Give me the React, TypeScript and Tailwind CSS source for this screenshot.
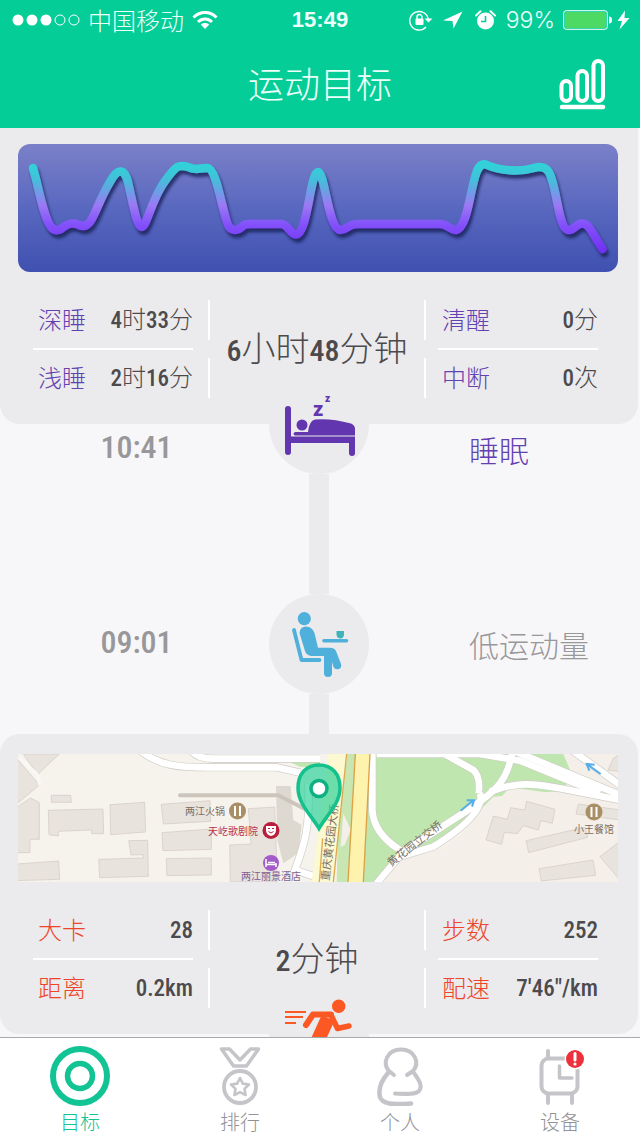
import { useState } from "react"

type Stat = { label: string; value: string }

const sleepStats: Stat[] = [
  { label: "深睡", value: "4时33分" },
  { label: "浅睡", value: "2时16分" },
  { label: "清醒", value: "0分" },
  { label: "中断", value: "0次" },
]

const runStats: Stat[] = [
  { label: "大卡", value: "28" },
  { label: "距离", value: "0.2km" },
  { label: "步数", value: "252" },
  { label: "配速", value: "7'46\"/km" },
]

const StatusBar = () => (
  <div className="grid h-10 grid-cols-[1fr_auto_1fr] items-center px-[10px]">
    <div className="flex items-center">
      <svg className="ml-[2px]" width="68" height="12" viewBox="0 0 68 12" fill="#fff">
        <circle cx="6" cy="6" r="5.5" />
        <circle cx="20" cy="6" r="5.5" />
        <circle cx="34" cy="6" r="5.5" />
        <circle cx="48" cy="6" r="5" fill="none" stroke="#fff" />
        <circle cx="62" cy="6" r="5" fill="none" stroke="#fff" />
      </svg>
      <span className="ml-2 text-[24px] leading-10 font-light">中国移动</span>
      <svg className="ml-2" width="26" height="20" viewBox="0 0 26 20" fill="none" stroke="#fff" strokeWidth="3">
        <path d="M1.5 7.500C8 .8 18 .8 24.500 7.500" />
        <path d="M6 12C10 8 16 8 20 12" />
        <path d="M13 19L8.800 14.600C11 12.600 15 12.600 17.200 14.600Z" fill="#fff" stroke="none" />
      </svg>
    </div>
    <span className="font-['Liberation_Sans',sans-serif] text-[22px] leading-10 font-bold">15:49</span>
    <div className="flex items-center justify-end">
      <svg width="24" height="22" viewBox="0 0 24 22" fill="none" stroke="#fff" strokeWidth="1.4">
        <path d="M17 18A9.300 9.300 0 1 1 19.300 10.500" />
        <path d="M15.500 9.500h8L19.500 13.500z" fill="#fff" stroke="none" />
        <rect x="6.500" y="9.500" width="8" height="6.500" rx="1" fill="#fff" stroke="none" />
        <path d="M8 10V8a2.500 2.500 0 0 1 5 0v2" />
      </svg>
      <svg className="ml-[10px]" width="20" height="18" viewBox="0 0 20 18" fill="#fff">
        <path d="M19.500 .5L0 9.500l9.500 .6L10.500 17.500z" />
      </svg>
      <svg className="ml-3" width="21" height="20" viewBox="0 0 21 20" fill="#fff">
        <circle cx="10.500" cy="11" r="8.500" />
        <path d="M1 5.500L5.500 1.200M20 5.500L15.500 1.200" stroke="#fff" strokeWidth="2" strokeLinecap="round" />
        <path d="M10.500 6v5.500H6" fill="none" stroke="#05cd98" strokeWidth="1.600" />
      </svg>
      <span className="ml-[10px] font-[Inter,sans-serif] text-[23px] leading-10 font-light">99%</span>
      <svg className="ml-2" width="67" height="20" viewBox="0 0 67 20">
        <rect x=".7" y=".7" width="43.600" height="18.600" rx="2.500" fill="none" stroke="#fff" />
        <rect x="2" y="2" width="41" height="16" rx="1.500" fill="#4cd964" />
        <path d="M46 6.500q3 0 3 3.500t-3 3.500z" fill="#fff" />
        <path d="M62 0.500L54.500 11h4.500l-2.500 8.500L66.500 8H61.500z" fill="#fff" />
      </svg>
    </div>
  </div>
)

const SleepChart = () => (
  <svg className="block h-auto w-full" viewBox="0 0 600 128" role="img" aria-label="睡眠曲线">
    <defs>
      <linearGradient id="sleepLine" gradientUnits="userSpaceOnUse" x1="0" y1="18" x2="0" y2="108">
        <stop offset="0.05" stopColor="#33d0d8" />
        <stop offset="0.2" stopColor="#45bedb" />
        <stop offset="0.48" stopColor="#9b79f4" />
        <stop offset="0.7" stopColor="#8350fb" />
        <stop offset="1" stopColor="#7030f2" />
      </linearGradient>
      <filter id="lineShadow" x="-5%" y="-10%" width="110%" height="130%">
        <feDropShadow dx="2" dy="4" stdDeviation="1.5" floodColor="#1c2458" floodOpacity="0.8" />
      </filter>
    </defs>
    <path
      d="M15 24C21 44 25 72 33 83Q37 88 43 85C50 79 55 78 61 81C75 87 76 64 92 38C99 25 106 23 110 38C115 60 119 83 123.500 83C129 83 133 56 147 37C158 22 160 20 170 23C177 27 182 24 189 24C198 24 203 60 209 78C212 88 219 88 226 81Q228 80 233 80H263C270 80 272 90 278 90.500C290 90 292 28 300 28C307 28 310 84 322 86C330 86 330 80 339 80H422C430 80 431 86 438 86C450 84 452 44 459 27Q463 18 469 21C482 27 502 28 516 24Q529 20 533 33C540 52 541 86 551 86C557 86 558 79 565 79.500C572 80 576 93 584.500 105"
      fill="none"
      stroke="url(#sleepLine)"
      strokeWidth="8.500"
      strokeLinecap="round"
      strokeLinejoin="round"
      filter="url(#lineShadow)"
    />
  </svg>
)

const RouteMap = () => (
  <svg className="block h-auto w-full bg-[#f6f2ec]" viewBox="0 0 600 128" role="img" aria-label="运动地图">
    <g transform="translate(-18 -24) scale(0.33333)">
      <rect x="1400" y="72" width="460" height="390" fill="#f5efea" />
      {/* parks */}
      <path d="M1130 72H1690L1710 120L1695 182L1480 200L1380 300L1180 456H1030V72Z" fill="#bfe6ae" />
      <path d="M1530 172L1840 215V456H1120L1200 380L1330 355L1440 270Z" fill="#f5efea" />
      <path d="M1020 72H1060V456H1010Z" fill="#c7e6b2" />
      <path d="M860 92L960 92V112L900 110Z" fill="#bfe6ae" />
      <path d="M1030 250L1052 300L1034 345L1022 350Z" fill="#f5efea" />
      {/* buildings */}
      <g fill="#e9e3dd" stroke="#d0c9c3" strokeWidth="2">
        <path d="M70 72H178L112 134Z" />
        <path d="M50 85L118 165L50 222Z" />
        <path d="M50 232L92 204L118 218V328H90V368H50Z" />
        <path d="M154 196H212L214 217H154Z" />
        <path d="M145 241L309 237L311 311H275V300L175 304V318L147 314Z" />
        <path d="M330 224L434 217L437 306L332 314Z" />
        <path d="M386 332L443 331L445 439L299 443L296 388L430 384V374L393 375Z" />
        <path d="M50 402L176 393L179 448L50 452Z" />
        <path d="M484 223L630 212L632 274L490 282Z" />
        <path d="M486 308L634 297V358L489 362Z" />
        <path d="M499 386L634 384V435L501 437Z" />
        <path d="M745 236L824 231L832 456H691L689 345L753 342Z" />
        <path d="M520 258L562 268L572 233L614 240L620 214L705 238L697 280L662 272L655 300L610 287L592 311L553 307L545 343L498 330Z" transform="translate(960 0)" />
        <path d="M1578 332L1755 292L1763 322L1586 368Z" />
        <path d="M1617 416L1779 390L1787 436L1624 453Z" />
        <path d="M1735 222L1860 240V270L1728 252Z" />
        <path d="M1860 334L1800 380L1860 450Z" />
        <path d="M1840 85L1824 120L1860 125V72Z" />
      </g>
      <path d="M828 168H872L880 270L905 285L895 370L850 400L832 330Z" fill="#ddd8d0" />
      <path d="M540 196H835L910 235" fill="none" stroke="#ccc5bc" strokeWidth="12" strokeLinecap="round" />
      {/* small roads */}
      <g fill="none" stroke="#cfcdc8" strokeWidth="24">
        <path d="M415 58C480 110 540 112 620 112H830L900 128" />
        <path d="M575 62Q590 86 640 86H960" />
        <path d="M925 160C930 290 915 340 885 420L960 445" />
        <path d="M1117 60V240Q1120 310 1200 360" />
        <path d="M1130 72H1500" />
        <path d="M1330 70L1420 120Q1442 140 1436 190" />
        <path d="M1538 60C1520 170 1470 190 1420 230L1210 365L1130 460" />
        <path d="M1440 190Q1460 250 1300 350L1200 380" />
        <path d="M1470 185C1560 150 1620 165 1680 175L1860 210" />
        <path d="M1440 72L1560 92L1800 190" />
        <path d="M1540 62L1860 195" />
        <path d="M1715 60L1860 165" />
      </g>
      <g fill="none" stroke="#fff" strokeWidth="20">
        <path d="M415 58C480 110 540 112 620 112H830L900 128" />
        <path d="M575 62Q590 86 640 86H960" />
        <path d="M925 160C930 290 915 340 885 420L960 445" />
        <path d="M1117 60V240Q1120 310 1200 360" />
        <path d="M1130 72H1500" />
        <path d="M1330 70L1420 120Q1442 140 1436 190" />
        <path d="M1538 60C1520 170 1470 190 1420 230L1210 365L1130 460" />
        <path d="M1440 190Q1460 250 1300 350L1200 380" />
        <path d="M1470 185C1560 150 1620 165 1680 175L1860 210" />
        <path d="M1440 72L1560 92L1800 190" />
        <path d="M1540 62L1860 195" />
        <path d="M1715 60L1860 165" />
      </g>
      <path d="M112 134L120 165M60 85L112 134" stroke="#faf8f4" strokeWidth="10" />
      {/* main roads */}
      <path d="M985 72H1042L1000 456H935Z" fill="#fcf8cf" />
      <path d="M1040 72L1000 456M968 325L958 456" fill="none" stroke="#dda84d" strokeWidth="4" />
      <path d="M1066 72H1110L1090 456H1044Z" fill="#fdf3ac" />
      <path d="M1066 72L1044 456M1110 72L1090 456" fill="none" stroke="#dfa047" strokeWidth="4" />
      {/* one-way arrows */}
      <g fill="none" stroke="#55aee8" strokeWidth="6">
        <path d="M1382 242L1420 211M1400 211H1422L1416 230" />
        <path d="M1802 132L1762 103M1768 122L1760 102L1784 104" />
      </g>
    </g>
    <g fontSize="10" fill="#7b6f63">
      <text x="167" y="61">两江火锅</text>
      <text x="190" y="81" fill="#b8324f">天屹歌剧院</text>
      <text x="223" y="126" fill="#7c5f93">两江丽景酒店</text>
      <text x="556" y="79">小王餐馆</text>
      <text transform="translate(311 127) rotate(-83)" fontSize="11">重庆黄花园大桥</text>
      <text transform="translate(373 113) rotate(-38)" fontSize="11">黄花园立交桥</text>
    </g>
    {/* places */}
    <g fill="#a98f66">
      <circle cx="219.500" cy="57" r="8.500" />
      <circle cx="576" cy="58" r="8.500" />
    </g>
    <path d="M217 52v10M222 52v10M573.500 53v10M578.500 53v10" stroke="#fff" strokeWidth="2" />
    <circle cx="253" cy="76.500" r="8.500" fill="#b91f3c" />
    <path d="M248 72h10v4q0 5 -5 6q-5 -1 -5 -6z" fill="#fff" />
    <path d="M250 74.500h2M254 74.500h2M250.500 77.500q2.500 3 5 0" stroke="#b91f3c" fill="none" />
    <circle cx="253" cy="109" r="8" fill="#a35bc9" />
    <path d="M248 105v8M248 110.500h10M258 109v4M250 108.500h7" stroke="#fff" strokeWidth="1.500" />
    {/* current position */}
    <path d="M301 74.500C294 62 280 50 280 34C280 20 288 11 301 11S322 20 322 34C322 50 308 62 301 74.500Z" fill="#21cf95" fillOpacity="0.65" stroke="#14c08c" strokeWidth="3.500" />
    <circle cx="301" cy="34.500" r="8" fill="#fff" stroke="#0fb183" strokeWidth="3.500" />
  </svg>
)

const BedIcon = () => (
  <svg viewBox="0 0 100 100" className="size-full" fill="#6136ae">
    <rect x="16" y="32" width="6" height="49" rx="3" />
    <circle cx="33" cy="51" r="5.500" />
    <path d="M26 58H39Q40 47 46 45.500Q62 44 82 49.500Q86 51 86 55V61.500H26Q23 60 26 58Z" />
    <path d="M20 62.500H86V79a3 3 0 0 1 -6 0V69H20Z" />
    <g fontFamily="Roboto, sans-serif" fontWeight="900">
      <text x="44" y="42" fontSize="20">z</text>
      <text x="56" y="28" fontSize="10">z</text>
    </g>
  </svg>
)

const SittingIcon = () => (
  <svg viewBox="0 0 100 100" className="size-full" fill="#4eb0db">
    <circle cx="35.300" cy="24.700" r="6.600" />
    <path d="M25 36L32.500 66H50.500" fill="none" stroke="#4eb0db" strokeWidth="3.800" strokeLinecap="round" strokeLinejoin="round" />
    <path d="M30.500 39Q31 32.500 37 32.500Q43 32.500 45.500 39L49 53.700H61Q65 53.700 67 57L72 70Q73 74 70 75Q66 76 64.500 73L63 68V79a4 4 0 0 1 -8 0V62H42Q37 61 36 57Z" />
    <path d="M55 46.700H77.500" stroke="#4eb0db" strokeWidth="3.600" strokeLinecap="round" />
    <path d="M67.500 37H75V40Q75 44.500 71 44.500Q67.500 44 67.500 40Z" fill="#3fb3bb" />
  </svg>
)

const RunningIcon = () => (
  <svg viewBox="0 0 100 100" className="size-full" fill="none" stroke="#fc5823">
    <path d="M16 28H37M16 33H34M16 39H27" strokeWidth="2" />
    <circle cx="69.700" cy="22.300" r="6.700" fill="#fc5823" stroke="none" />
    <path d="M37 41L44 30.500H62" strokeWidth="6" strokeLinecap="round" strokeLinejoin="round" />
    <path d="M59 34L49 56L64 66" strokeWidth="14" strokeLinejoin="round" />
    <path d="M62 31L68.500 44.500L80 42" strokeWidth="5.500" strokeLinecap="round" strokeLinejoin="round" />
  </svg>
)

// numbers go in a heavy condensed face, the units stay light
const Num = ({ text, size }: { text: string; size: string }) => (
  <>
    {text.split(/([\u4e00-\u9fa5]+)/).map((part, i) =>
      i % 2 ? (
        part
      ) : (
        <span key={i} className={"font-['Roboto_Condensed',Roboto,sans-serif] font-medium " + size}>
          {part}
        </span>
      )
    )}
  </>
)

const StatRow = ({ stat, color, side }: { stat: Stat; color: string; side: "left" | "right" }) => (
  <div
    className={
      "flex h-10 items-center justify-between border-white pb-[2px] text-[24px] leading-9 " +
      (side === "left" ? "border-r-2 pr-[15px] pl-[5px]" : "border-l-2 pl-4")
    }
  >
    <dt className={"font-light " + color}>{stat.label}</dt>
    <dd className="font-light text-[#4c4a4c]">
      <Num text={stat.value} size="text-[23px]" />
    </dd>
  </div>
)

const StatPanel = ({ stats, total, color }: { stats: Stat[]; total: string; color: string }) => (
  <div className="flex items-center pt-7 pr-10 pb-[26px] pl-[33px]">
    <dl className="flex w-[177px] flex-col gap-2">
      <StatRow stat={stats[0]} color={color} side="left" />
      <div className="mr-[17px] h-[2px] bg-white" />
      <StatRow stat={stats[1]} color={color} side="left" />
    </dl>
    <p className="flex-1 text-center text-[34px] leading-10 font-light whitespace-nowrap text-[#4c4a4c]">
      <Num text={total} size="text-[30px]" />
    </p>
    <dl className="flex w-[174px] flex-col gap-2">
      <StatRow stat={stats[2]} color={color} side="right" />
      <div className="ml-[14px] h-[2px] bg-white" />
      <StatRow stat={stats[3]} color={color} side="right" />
    </dl>
  </div>
)

const tabs = [
  {
    name: "目标",
    icon: (
      <>
        <circle cx="30" cy="30" r="27" strokeWidth="6" />
        <circle cx="30" cy="30" r="12.500" strokeWidth="5.500" />
      </>
    ),
  },
  {
    name: "排行",
    icon: (
      <>
        <path d="M11.500 3H19.500L30 14L40.500 3H48.500L36.500 20H23.500Z" strokeWidth="3.500" />
        <circle cx="30" cy="41" r="16" strokeWidth="3.800" />
        <path d="M30 32L32.800 37.600L39 38.500L34.500 42.900L35.600 49L30 46.100L24.400 49L25.500 42.900L21 38.500L27.200 37.600Z" strokeWidth="2.600" />
      </>
    ),
  },
  {
    name: "个人",
    icon: (
      <>
        <path d="M24 29L19 25C12 17 17 3.500 31 3.500S50 17 43 25L37 29" strokeWidth="4" />
        <path d="M18 27C12 34 8 43 10 51C12 58 23 59 41 57.500" strokeWidth="4.500" />
        <path d="M44 27C49 34 53 40 49 45C45 49 36 48 25 47.500" strokeWidth="4" />
      </>
    ),
  },
  {
    name: "设备",
    icon: (
      <>
        <rect x="11.500" y="12.500" width="36" height="35" rx="7" strokeWidth="4" />
        <path d="M18 5V12M18 48V57M42 48V57" strokeWidth="4" />
        <path d="M29.500 20V32H42" strokeWidth="3.500" />
        <circle cx="45" cy="13" r="10.500" fill="#fff" stroke="none" />
        <circle cx="45" cy="13" r="9" fill="#ee303c" stroke="none" />
        <path d="M45 7.500V14" stroke="#fff" strokeWidth="3" />
        <circle cx="45" cy="18" r="1.600" fill="#fff" stroke="none" />
      </>
    ),
  },
]

const Home = () => {
  const [active, setActive] = useState("目标")

  return (
    <div className="flex h-screen flex-col overflow-hidden bg-[#f7f6f9] font-['Noto_Sans_CJK_SC',sans-serif]">
      <header className="bg-[#05cd98] text-[#ecfff9]">
        <StatusBar />
        <div className="grid h-[88px] grid-cols-[1fr_auto_1fr] items-center">
          <h1 className="col-start-2 pb-1 text-[36px] leading-[44px] font-light">运动目标</h1>
          <button aria-label="统计" className="mr-[33px] justify-self-end">
            <svg width="48" height="52" viewBox="0 0 48 52" fill="none" stroke="#fff" strokeWidth="4">
              <rect x="2.500" y="23" width="9.500" height="20" rx="4.700" />
              <rect x="18.500" y="13" width="9.500" height="30" rx="4.700" />
              <rect x="34.500" y="3" width="9.500" height="40" rx="4.700" />
              <path d="M3 49H44" strokeLinecap="round" strokeWidth="4.500" />
            </svg>
          </button>
        </div>
      </header>

      <main className="mr-[2px] min-h-0 flex-1 overflow-y-auto [scrollbar-width:none]">
        <section className="rounded-b-[20px] bg-[#ebeaec] pt-4">
          <div className="mr-5 ml-[18px] overflow-hidden rounded-xl bg-linear-to-b from-[#7b80c8] via-[#5968bf] to-[#4050b0]">
            <SleepChart />
          </div>
          <StatPanel stats={sleepStats} total="6小时48分钟" color="text-[#6341b0]" />
        </section>

        <div className="relative grid h-[50px] grid-cols-[1fr_100px_1fr] items-center">
          <time className="pl-1 text-center leading-10 text-[#98979a]">
            <Num text="10:41" size="text-[32px]" />
          </time>
          <div className="-mt-[50px] size-[100px] rounded-full bg-[#ebeaec]">
            <BedIcon />
          </div>
          <span className="pl-[100px] text-[30px] leading-10 font-light text-[#6341b0]">睡眠</span>
        </div>
        <div className="mx-auto h-[120px] w-5 bg-[#ebeaec]" />
        <div className="grid grid-cols-[1fr_100px_1fr] items-center">
          <time className="pl-1 text-center leading-10 text-[#98979a]">
            <Num text="09:01" size="text-[32px]" />
          </time>
          <div className="size-[100px] rounded-full bg-[#ebeaec]">
            <SittingIcon />
          </div>
          <span className="pl-[100px] text-[30px] leading-10 font-light whitespace-nowrap text-[#98979a]">低运动量</span>
        </div>
        <div className="mx-auto h-10 w-5 bg-[#ebeaec]" />

        <section className="rounded-[20px] bg-[#ebeaec] pt-5">
          <div className="mr-5 ml-[18px]">
            <RouteMap />
          </div>
          <StatPanel stats={runStats} total="2分钟" color="text-[#ee4429]" />
        </section>
        <div className="relative mx-auto -mt-[50px] size-[100px] rounded-full bg-[#ebeaec]">
          <RunningIcon />
        </div>
      </main>

      <nav className="grid h-[99px] shrink-0 grid-cols-4 border-t border-[#a9a9ab] bg-white">
        {tabs.map((tab) => (
          <button
            key={tab.name}
            onClick={() => setActive(tab.name)}
            className={"flex flex-col items-center pt-2 " + (tab.name === active ? "text-[#12c393]" : "text-[#c5c4c8]")}
          >
            <svg width="60" height="60" viewBox="0 0 60 60" fill="none" stroke="currentColor" strokeLinecap="round" strokeLinejoin="round">
              {tab.icon}
            </svg>
            <span className={"mt-1 text-[20px] leading-6 font-light " + (tab.name === active ? "" : "text-[#929195]")}>{tab.name}</span>
          </button>
        ))}
      </nav>
    </div>
  )
}

export default Home
